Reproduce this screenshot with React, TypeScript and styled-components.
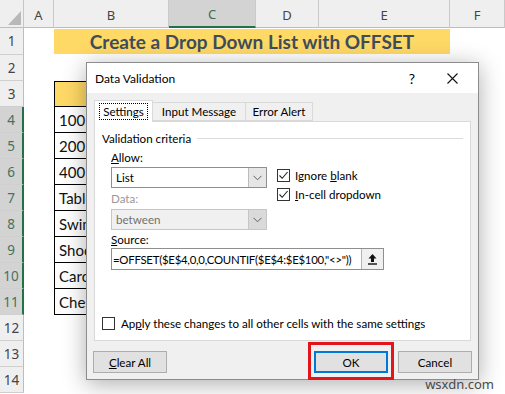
import styled, { createGlobalStyle } from "styled-components";

const GlobalStyle = createGlobalStyle`
  html, body {
    margin: 0;
    padding: 0;
    background: #ffffff;
  }
  body {
    width: 505px;
    height: 394px;
    overflow: hidden;
    font-family: Lato, "Liberation Sans", sans-serif;
  }
`;

const COLUMNS = ["A", "B", "C", "D", "E", "F"];
const ITEMS = ["100 Meter Race", "200 Meter Race", "400 Meter Race", "Table Tennis", "Swimming", "Shooting", "Carom", "Chess"];
const SOURCE = '=OFFSET($E$4,0,0,COUNTIF($E$4:$E$100,"<>"))';

export default function App() {
  const rows = Array.from({ length: 14 }, (_, i) => i + 1);

  return (
    <>
      <GlobalStyle />
      <Sheet>
        <Corner />
        {COLUMNS.map((c) => (
          <ColumnHeader key={c} $active={c === "C"}>{c}</ColumnHeader>
        ))}
        {rows.map((n) => (
          <SheetRow key={n} n={n} />
        ))}

        <Dialog>
          <TitleBar>
            <DialogTitle>Data Validation</DialogTitle>
            <TitleButton>?</TitleButton>
            <TitleButton $close>
              <svg width="11" height="11" viewBox="0 0 11 11">
                <path d="M0.5 0.5 L10.5 10.5 M10.5 0.5 L0.5 10.5" stroke="#111" strokeWidth="1.1" />
              </svg>
            </TitleButton>
          </TitleBar>

          <DialogBody>
            <Tabs>
              <Tab $selected $width={59}><FocusRing>Settings</FocusRing></Tab>
              <Tab $width={94}>Input Message</Tab>
              <Tab $width={68}>Error Alert</Tab>
            </Tabs>

            <Panel>
              <GroupHeader>
                <span>Validation criteria</span>
                <GroupLine />
              </GroupHeader>

              <Criteria>
                <Columns>
                  <LeftColumn>
                    <FieldLabel $top={4}><u>A</u>llow:</FieldLabel>
                    <Select $top={1}>
                      <SelectValue>List</SelectValue>
                      <SelectArrow><Chevron /></SelectArrow>
                    </Select>
                    <FieldLabel $top={3} $disabled>Data:</FieldLabel>
                    <Select $top={2} $disabled>
                      <SelectValue>between</SelectValue>
                      <SelectArrow $disabled><Chevron /></SelectArrow>
                    </Select>
                  </LeftColumn>
                  <RightColumn>
                    <CheckRow>
                      <CheckBox><Tick /></CheckBox>
                      <span>Ignore <u>b</u>lank</span>
                    </CheckRow>
                    <CheckRow>
                      <CheckBox><Tick /></CheckBox>
                      <span><u>I</u>n-cell dropdown</span>
                    </CheckRow>
                  </RightColumn>
                </Columns>
                <FieldLabel $top={2}><u>S</u>ource:</FieldLabel>
                <SourceInput>
                  <SourceText>{SOURCE}</SourceText>
                  <RefButton>
                    <svg width="11" height="12" viewBox="0 0 11 12">
                      <path d="M5.5 1 L1.5 5.5 H4 V9 H7 V5.5 H9.5 Z" fill="#111" />
                      <path d="M1 11 H10" stroke="#111" strokeWidth="1.4" />
                    </svg>
                  </RefButton>
                </SourceInput>
              </Criteria>

              <ApplyRow>
                <CheckBox />
                <span>Ap<u>p</u>ly these changes to all other cells with the same settings</span>
              </ApplyRow>
            </Panel>

            <Footer>
              <Button><u>C</u>lear All</Button>
              <Spacer />
              <Highlight>
                <Button $primary>OK</Button>
              </Highlight>
              <Button>Cancel</Button>
            </Footer>
          </DialogBody>
        </Dialog>

        <Watermark>wsxdn.com</Watermark>
      </Sheet>
    </>
  );
}

function SheetRow({ n }: { n: number }) {
  const active = n >= 4 && n <= 11;
  const header = <RowHeader $active={active}>{n}</RowHeader>;

  if (n === 1) {
    return (
      <>
        {header}
        <Cell />
        <TitleCell>Create a Drop Down List with OFFSET</TitleCell>
        <Cell />
      </>
    );
  }

  if (n >= 3 && n <= 11) {
    const isHead = n === 3;
    return (
      <>
        {header}
        <Cell />
        <TableCell $head={isHead}>{isHead ? "Games" : ITEMS[n - 4]}</TableCell>
        <Cell />
        <Cell />
        <Cell />
        <Cell />
      </>
    );
  }

  return (
    <>
      {header}
      {COLUMNS.map((c) => <Cell key={c} />)}
    </>
  );
}

function Chevron() {
  return (
    <svg width="9" height="6" viewBox="0 0 9 6">
      <path d="M0.5 0.8 L4.5 4.8 L8.5 0.8" fill="none" stroke="#606060" strokeWidth="1" />
    </svg>
  );
}

function Tick() {
  return (
    <svg width="11" height="11" viewBox="0 0 11 11">
      <path d="M1.5 5.5 L4.2 8.3 L9.6 2" fill="none" stroke="#222" strokeWidth="1.1" />
    </svg>
  );
}

const Sheet = styled.div`
  position: relative;
  width: 505px;
  height: 394px;
  display: grid;
  grid-template-columns: 24px 30px 115px 87px 63px 131px 1fr;
  grid-template-rows: 28px 27px repeat(13, 26px);
  overflow: hidden;
  background: #ffffff;
`;

const Corner = styled.div`
  position: relative;
  background: #efefef;
  border-right: 1px solid #c6c6c6;
  border-bottom: 1px solid #bdbdbd;

  &::after {
    content: "";
    position: absolute;
    right: 2px;
    bottom: 2px;
    width: 13px;
    height: 14px;
    background: #b9b9b9;
    clip-path: polygon(100% 0, 100% 100%, 0 100%);
  }
`;

const ColumnHeader = styled.div<{ $active?: boolean }>`
  display: flex;
  align-items: flex-end;
  justify-content: center;
  padding-bottom: 3px;
  box-sizing: border-box;
  background: ${(p) => (p.$active ? "#d3d3d3" : "#efefef")};
  border-right: 1px solid #c9c9c9;
  border-bottom: ${(p) => (p.$active ? "2px solid #217346" : "1px solid #bdbdbd")};
  font-family: "Noto Sans", "Open Sans", sans-serif;
  font-size: 13px;
  color: ${(p) => (p.$active ? "#3f6b50" : "#444444")};
`;

const RowHeader = styled.div<{ $active?: boolean }>`
  display: flex;
  align-items: center;
  justify-content: center;
  box-sizing: border-box;
  background: ${(p) => (p.$active ? "#d3d3d3" : "#efefef")};
  border-bottom: 1px solid #cfcfcf;
  border-right: ${(p) => (p.$active ? "2px solid #217346" : "1px solid #bdbdbd")};
  font-family: "Noto Sans", "Open Sans", sans-serif;
  font-size: 13.5px;
  color: ${(p) => (p.$active ? "#4a7159" : "#444444")};
`;

const Cell = styled.div`
  background: #ffffff;
`;

const TitleCell = styled.div`
  grid-column: span 4;
  display: flex;
  align-items: center;
  justify-content: center;
  margin: 1px 0;
  background: #ffd966;
  font-family: Lato, "Liberation Sans", sans-serif;
  font-weight: 700;
  font-size: 19px;
  color: #3e4d5c;
`;

const TableCell = styled.div<{ $head?: boolean }>`
  display: flex;
  align-items: center;
  justify-content: ${(p) => (p.$head ? "center" : "flex-start")};
  padding-left: 4px;
  box-sizing: border-box;
  background: ${(p) => (p.$head ? "#ffd966" : "#ffffff")};
  border: 1px solid #000000;
  border-top: ${(p) => (p.$head ? "1px solid #000000" : "none")};
  font-family: Lato, "Liberation Sans", sans-serif;
  font-size: 15px;
  font-weight: ${(p) => (p.$head ? 700 : 400)};
  color: #111111;
  white-space: nowrap;
  overflow: hidden;
`;

const Dialog = styled.div`
  position: absolute;
  left: 86px;
  top: 62px;
  width: 393px;
  box-sizing: border-box;
  background: #f0f0f0;
  border: 1px solid #8c8c8c;
  box-shadow: 0 4px 22px rgba(0, 0, 0, 0.32);
  font-family: Lato, "Liberation Sans", sans-serif;
  font-size: 11.6px;
  color: #000000;
`;

const TitleBar = styled.div`
  display: flex;
  align-items: center;
  height: 30px;
  padding-left: 8px;
  background: #ffffff;
`;

const DialogTitle = styled.div`
  flex: 1;
  font-size: 12px;
`;

const TitleButton = styled.div<{ $close?: boolean }>`
  display: flex;
  align-items: center;
  justify-content: center;
  width: 40px;
  height: 30px;
  margin-right: ${(p) => (p.$close ? "6px" : "0")};
  font-size: 14px;
`;

const DialogBody = styled.div`
  padding: 7px 7px 6px 7px;
`;

const Tabs = styled.div`
  display: flex;
  align-items: flex-end;
  height: 21px;
  position: relative;
  z-index: 1;
`;

const Tab = styled.div<{ $selected?: boolean; $width: number }>`
  display: flex;
  align-items: center;
  justify-content: center;
  box-sizing: border-box;
  width: ${(p) => p.$width}px;
  height: ${(p) => (p.$selected ? "22px" : "19px")};
  margin-bottom: ${(p) => (p.$selected ? "-1px" : "0")};
  background: ${(p) => (p.$selected ? "#ffffff" : "#f0f0f0")};
  border: 1px solid #d9d9d9;
  border-bottom: ${(p) => (p.$selected ? "none" : "1px solid #d9d9d9")};
  & + & {
    margin-left: -1px;
  }
`;

const FocusRing = styled.span`
  padding: 1px 3px;
  outline: 1px dotted #000000;
`;

const Panel = styled.div`
  display: flex;
  flex-direction: column;
  height: 220px;
  box-sizing: border-box;
  padding: 8px 7px 0 7px;
  background: #ffffff;
  border: 1px solid #d9d9d9;
`;

const GroupHeader = styled.div`
  display: flex;
  align-items: center;
  height: 16px;
`;

const GroupLine = styled.div`
  flex: 1;
  height: 1px;
  margin-left: 6px;
  background: #dcdcdc;
`;

const Criteria = styled.div`
  display: flex;
  flex-direction: column;
  margin-left: 9px;
`;

const Columns = styled.div`
  display: grid;
  grid-template-columns: 156px 1fr;
  column-gap: 10px;
`;

const LeftColumn = styled.div`
  display: flex;
  flex-direction: column;
`;

const RightColumn = styled.div`
  display: flex;
  flex-direction: column;
  gap: 2px;
  margin-top: 21px;
`;

const FieldLabel = styled.div<{ $top: number; $disabled?: boolean }>`
  height: 16px;
  line-height: 16px;
  margin-top: ${(p) => p.$top}px;
  color: ${(p) => (p.$disabled ? "#9a9a9a" : "#000000")};
`;

const Select = styled.div<{ $top: number; $disabled?: boolean }>`
  display: flex;
  height: 21px;
  margin-top: ${(p) => p.$top}px;
  box-sizing: border-box;
  background: ${(p) => (p.$disabled ? "#f0f0f0" : "#ffffff")};
  border: 1px solid ${(p) => (p.$disabled ? "#c6c6c6" : "#8f8f8f")};
  color: ${(p) => (p.$disabled ? "#707070" : "#000000")};
`;

const SelectValue = styled.div`
  flex: 1;
  display: flex;
  align-items: center;
  padding-left: 4px;
`;

const SelectArrow = styled.div<{ $disabled?: boolean }>`
  display: flex;
  align-items: center;
  justify-content: center;
  width: 17px;
  background: ${(p) => (p.$disabled ? "#dadada" : "#e6e6e6")};
  border-left: 1px solid ${(p) => (p.$disabled ? "#c6c6c6" : "#bcbcbc")};
`;

const CheckRow = styled.div`
  display: flex;
  align-items: center;
  gap: 5px;
  height: 17px;
`;

const CheckBox = styled.div`
  display: flex;
  align-items: center;
  justify-content: center;
  width: 13px;
  height: 13px;
  box-sizing: border-box;
  flex-shrink: 0;
  background: #ffffff;
  border: 1px solid #333333;
`;

const SourceInput = styled.div`
  display: flex;
  width: 273px;
  height: 22px;
  box-sizing: border-box;
  border: 1px solid #8f8f8f;
  background: #ffffff;
`;

const SourceText = styled.div`
  flex: 1;
  display: flex;
  align-items: center;
  padding-left: 1px;
  font-size: 11.4px;
  letter-spacing: -0.25px;
  white-space: nowrap;
  overflow: hidden;
`;

const RefButton = styled.div`
  display: flex;
  align-items: center;
  justify-content: center;
  width: 21px;
  background: #f0f0f0;
  border-left: 1px solid #b5b5b5;
`;

const ApplyRow = styled.div`
  display: flex;
  align-items: center;
  gap: 6px;
  height: 16px;
  margin-top: 45px;
`;

const Footer = styled.div`
  display: flex;
  align-items: center;
  gap: 10px;
  margin: 10px -1px 0 -1px;
`;

const Spacer = styled.div`
  flex: 1;
`;

const Highlight = styled.div`
  position: relative;

  &::after {
    content: "";
    position: absolute;
    left: -6px;
    right: -6px;
    top: -9px;
    bottom: -7px;
    border: 3px solid #e3151a;
    pointer-events: none;
  }
`;

const Button = styled.div<{ $primary?: boolean }>`
  display: flex;
  align-items: center;
  justify-content: center;
  width: 74px;
  height: 22px;
  box-sizing: border-box;
  background: #e1e1e1;
  border: 1px solid ${(p) => (p.$primary ? "#0078d7" : "#adadad")};
  box-shadow: ${(p) => (p.$primary ? "inset 0 0 0 1px #0078d7" : "none")};
`;

const Watermark = styled.div`
  position: absolute;
  right: 11px;
  bottom: 1px;
  font-family: "Noto Sans", "Open Sans", sans-serif;
  font-size: 13px;
  color: #4a4a4a;
`;
